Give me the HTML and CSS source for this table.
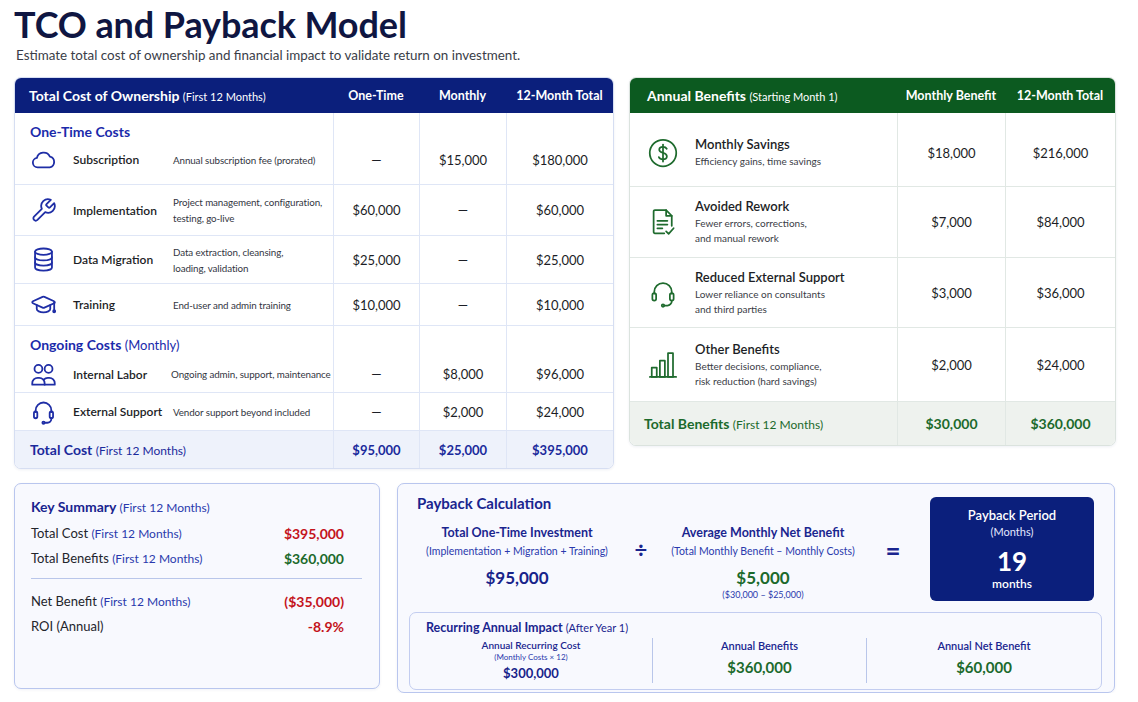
FILE: index.html
```html
<!DOCTYPE html>
<html lang="en">
<head>
<meta charset="utf-8">
<title>TCO and Payback Model</title>
<link rel="stylesheet" href="styles.css">
</head>
<body>
<div class="page">
  <h1 class="title">TCO and Payback Model</h1>
  <p class="subtitle">Estimate total cost of ownership and financial impact to validate return on investment.</p>

  <div class="top-row">
    <section class="card tco">
      <table class="grid">
        <colgroup><col class="t1"><col class="t2"><col class="t3"><col class="t4"></colgroup>
        <thead>
          <tr><th class="th-main">Total Cost of Ownership <span class="th-sub">(First 12 Months)</span></th><th>One-Time</th><th>Monthly</th><th>12-Month Total</th></tr>
        </thead>
        <tbody>
          <tr class="sec s1"><td class="sec-h">One-Time Costs</td><td></td><td></td><td></td></tr>
          <tr class="row r-sub">
            <td><div class="item">
              <svg class="ico" viewBox="0 0 24 24"><path d="M6.8 19a4.2 4.2 0 0 1-.7-8.35 6.2 6.2 0 0 1 11.6-1.2A4.9 4.9 0 0 1 17.6 19Z"/></svg>
              <span class="lbl">Subscription</span><span class="desc">Annual subscription fee (prorated)</span></div></td>
            <td class="num">—</td><td class="num">$15,000</td><td class="num">$180,000</td>
          </tr>
          <tr class="row r-impl">
            <td><div class="item">
              <svg class="ico" viewBox="0 0 24 24"><path d="M14.7 6.3a1 1 0 0 0 0 1.4l1.6 1.6a1 1 0 0 0 1.4 0l3.77-3.77a6 6 0 0 1-7.94 7.94l-6.91 6.91a2.12 2.12 0 0 1-3-3l6.91-6.91a6 6 0 0 1 7.940-7.94l-3.76 3.76z"/></svg>
              <span class="lbl">Implementation</span><span class="desc">Project management, configuration, testing, go-live</span></div></td>
            <td class="num">$60,000</td><td class="num">—</td><td class="num">$60,000</td>
          </tr>
          <tr class="row r-data">
            <td><div class="item">
              <svg class="ico" viewBox="0 0 24 24"><ellipse cx="12" cy="5" rx="7.5" ry="2.8"/><path d="M4.5 5v14c0 1.6 3.4 2.8 7.5 2.8s7.5-1.2 7.5-2.8V5"/><path d="M4.5 10c0 1.6 3.4 2.8 7.5 2.8s7.5-1.2 7.5-2.8"/><path d="M4.5 14.6c0 1.6 3.4 2.8 7.5 2.8s7.5-1.2 7.5-2.8"/></svg>
              <span class="lbl">Data Migration</span><span class="desc">Data extraction, cleansing,<br>loading, validation</span></div></td>
            <td class="num">$25,000</td><td class="num">—</td><td class="num">$25,000</td>
          </tr>
          <tr class="row r-train">
            <td><div class="item">
              <svg class="ico" viewBox="0 0 24 24"><path d="M21.42 10.92a1 1 0 0 0-.02-1.84L12.83 5.18a2 2 0 0 0-1.66 0L2.6 9.08a1 1 0 0 0 0 1.83l8.57 3.91a2 2 0 0 0 1.66 0z"/><path d="M21.5 10v6.5"/><circle cx="21.5" cy="18" r=".9"/><path d="M6 12.5V16c0 1.7 2.7 3 6 3s6-1.3 6-3v-3.5"/></svg>
              <span class="lbl">Training</span><span class="desc">End-user and admin training</span></div></td>
            <td class="num">$10,000</td><td class="num">—</td><td class="num">$10,000</td>
          </tr>
          <tr class="sec s2"><td class="sec-h">Ongoing Costs <span class="sec-sub">(Monthly)</span></td><td></td><td></td><td></td></tr>
          <tr class="row r-labor">
            <td><div class="item">
              <svg class="ico" viewBox="0 0 24 24"><circle cx="7.5" cy="7" r="3.5"/><circle cx="16.5" cy="7" r="3.5"/><path d="M2 21v-1.2A4.8 4.8 0 0 1 6.8 15h1.4a4.8 4.8 0 0 1 4.8 4.8V21Z"/><path d="M13 21h9v-1.2a4.8 4.8 0 0 0-4.8-4.8h-1.4a4.8 4.8 0 0 0-3.6 1.6"/></svg>
              <span class="lbl">Internal Labor</span><span class="desc nowrap">Ongoing admin, support, maintenance</span></div></td>
            <td class="num">—</td><td class="num">$8,000</td><td class="num">$96,000</td>
          </tr>
          <tr class="row r-ext">
            <td><div class="item">
              <svg class="ico" viewBox="0 0 24 24"><path d="M5 12.5V11a7 7 0 0 1 14 0v1.5"/><rect x="3.5" y="12" width="3" height="6" rx="1.5"/><rect x="17.5" y="12" width="3" height="6" rx="1.5"/><path d="M19 18v.5a3.5 3.5 0 0 1-3.5 3.5H13"/><circle cx="12" cy="22" r="1"/></svg>
              <span class="lbl">External Support</span><span class="desc">Vendor support beyond included</span></div></td>
            <td class="num">—</td><td class="num">$2,000</td><td class="num">$24,000</td>
          </tr>
          <tr class="total">
            <td class="tot-h">Total Cost <span class="tot-sub">(First 12 Months)</span></td>
            <td class="num">$95,000</td><td class="num">$25,000</td><td class="num">$395,000</td>
          </tr>
        </tbody>
      </table>
    </section>

    <section class="card ben">
      <table class="grid">
        <colgroup><col class="b1"><col class="b2"><col class="b3"></colgroup>
        <thead>
          <tr><th class="th-main">Annual Benefits <span class="th-sub">(Starting Month 1)</span></th><th>Monthly Benefit</th><th>12-Month Total</th></tr>
        </thead>
        <tbody>
          <tr class="brow b-save">
            <td><div class="bitem">
              <svg class="gico" viewBox="0 0 24 24"><circle cx="12" cy="12" r="10.6"/><path d="M15 8.6c-.5-1-1.6-1.6-3-1.6-1.8 0-3 .9-3 2.3 0 3.2 6.1 1.8 6.1 5.2 0 1.4-1.3 2.5-3.2 2.5-1.5 0-2.7-.6-3.2-1.7"/><path d="M12 5.2v13.6"/></svg>
              <div class="btext"><div class="bt">Monthly Savings</div><div class="bd">Efficiency gains, time savings</div></div></div></td>
            <td class="num">$18,000</td><td class="num">$216,000</td>
          </tr>
          <tr class="brow b-rew">
            <td><div class="bitem">
              <svg class="gico" viewBox="0 0 24 24"><path d="M13 21H5.5a1 1 0 0 1-1-1V3.5a1 1 0 0 1 1-1h9l4.5 4.5V15"/><path d="M14.5 2.5V7H19"/><path d="M7.5 11h8"/><path d="M7.5 14h8"/><path d="M7.5 17h4"/><path d="M14.5 19.5l2 2 4-4.5"/></svg>
              <div class="btext"><div class="bt">Avoided Rework</div><div class="bd">Fewer errors, corrections,<br>and manual rework</div></div></div></td>
            <td class="num">$7,000</td><td class="num">$84,000</td>
          </tr>
          <tr class="brow b-ext">
            <td><div class="bitem">
              <svg class="gico" viewBox="0 0 24 24"><path d="M5 12.5V11a7 7 0 0 1 14 0v1.5"/><rect x="3.5" y="12" width="3" height="6" rx="1.5"/><rect x="17.5" y="12" width="3" height="6" rx="1.5"/><path d="M19 18v.5a3.5 3.5 0 0 1-3.5 3.5H13"/><circle cx="12" cy="22" r="1"/></svg>
              <div class="btext"><div class="bt">Reduced External Support</div><div class="bd">Lower reliance on consultants<br>and third parties</div></div></div></td>
            <td class="num">$3,000</td><td class="num">$36,000</td>
          </tr>
          <tr class="brow b-oth">
            <td><div class="bitem">
              <svg class="gico" viewBox="0 0 24 24"><path d="M1.5 21.5h21"/><rect x="3" y="14" width="4" height="7.5"/><rect x="9.5" y="8.5" width="4" height="13"/><rect x="16" y="2.5" width="4" height="19"/></svg>
              <div class="btext"><div class="bt">Other Benefits</div><div class="bd">Better decisions, compliance,<br>risk reduction (hard savings)</div></div></div></td>
            <td class="num">$2,000</td><td class="num">$24,000</td>
          </tr>
          <tr class="btotal">
            <td class="btot-h">Total Benefits <span class="btot-sub">(First 12 Months)</span></td>
            <td class="num">$30,000</td><td class="num">$360,000</td>
          </tr>
        </tbody>
      </table>
    </section>
  </div>

  <div class="bottom-row">
    <section class="panel summary">
      <h2 class="ks-title">Key Summary <span class="ks-sub">(First 12 Months)</span></h2>
      <div class="ks-row"><span>Total Cost <span class="ks-note">(First 12 Months)</span></span><span class="ks-val red">$395,000</span></div>
      <div class="ks-row"><span>Total Benefits <span class="ks-note">(First 12 Months)</span></span><span class="ks-val green">$360,000</span></div>
      <hr class="ks-div">
      <div class="ks-row"><span>Net Benefit <span class="ks-note">(First 12 Months)</span></span><span class="ks-val red">($35,000)</span></div>
      <div class="ks-row"><span>ROI (Annual)</span><span class="ks-val red">-8.9%</span></div>
    </section>

    <section class="panel payback">
      <div class="pay-top">
        <div class="pay-left">
          <h2 class="pay-title">Payback Calculation</h2>
          <div class="formula">
            <div class="fcol f1">
              <div class="f-head">Total One-Time Investment</div>
              <div class="f-sub">(Implementation + Migration + Training)</div>
              <div class="f-val">$95,000</div>
            </div>
            <div class="op op1">÷</div>
            <div class="fcol f2">
              <div class="f-head">Average Monthly Net Benefit</div>
              <div class="f-sub">(Total Monthly Benefit – Monthly Costs)</div>
              <div class="f-val green">$5,000</div>
              <div class="f-note">($30,000 – $25,000)</div>
            </div>
            <div class="op op2">=</div>
          </div>
        </div>
        <div class="pay-box">
          <div class="pb-t">Payback Period</div>
          <div class="pb-s">(Months)</div>
          <div class="pb-n">19</div>
          <div class="pb-u">months</div>
        </div>
      </div>
      <div class="recur">
        <div class="rc-title">Recurring Annual Impact <span class="rc-sub">(After Year 1)</span></div>
        <div class="rc-cols">
          <div class="rc-col">
            <div class="rc-h small">Annual Recurring Cost</div>
            <div class="rc-n">(Monthly Costs × 12)</div>
            <div class="rc-v navy">$300,000</div>
          </div>
          <div class="rc-col sep">
            <div class="rc-h">Annual Benefits</div>
            <div class="rc-v big green">$360,000</div>
          </div>
          <div class="rc-col sep">
            <div class="rc-h">Annual Net Benefit</div>
            <div class="rc-v big green">$60,000</div>
          </div>
        </div>
      </div>
    </section>
  </div>
</div>
</body>
</html>
```

FILE: styles.css
```css
* { box-sizing: border-box; }
body {
  margin: 0;
  background: #ffffff;
  font-family: Lato, "Open Sans", "Liberation Sans", sans-serif;
  color: #1c1e26;
}
.page { width: 1138px; padding: 2px 0 0 14px; }

.title {
  margin: 0;
  font-size: 36px;
  line-height: 44px;
  font-weight: 700;
  color: #0f1642;
  letter-spacing: -0.1px;
}
.subtitle {
  margin: 0 0 0 2px;
  font-size: 13.4px;
  line-height: 18px;
  color: #3a3d48;
}

.top-row { display: flex; align-items: flex-start; gap: 15px; margin-top: 13px; }

.card {
  border: 1px solid #d6def2;
  border-radius: 7px;
  overflow: hidden;
  background: #fff;
  box-shadow: 0 1px 3px rgba(20, 40, 120, 0.07);
}
.tco { width: 600px; }
.ben { width: 487px; border-color: #dbe3de; }

.grid { width: 100%; border-collapse: separate; border-spacing: 0; table-layout: fixed; }
.t1 { width: 318px; } .t2 { width: 86px; } .t3 { width: 87px; } .t4 { width: 107px; }
.b1 { width: 267px; } .b2 { width: 108px; } .b3 { width: 110px; }

.grid th {
  height: 35px;
  padding: 0;
  color: #fff;
  font-size: 12.5px;
  font-weight: 700;
  text-align: center;
  vertical-align: middle;
}
.tco th { background: #0b1f7c; }
.ben th { background: #0c5a20; }
.grid th.th-main { text-align: left; font-size: 14px; padding-left: 14px; }
.ben th.th-main { padding-left: 17px; }
.th-sub { font-size: 11px; font-weight: 400; }

.grid td { padding: 0; vertical-align: middle; }
.tco td { border-bottom: 1px solid #dfe6f6; }
.tco td + td { border-left: 1px solid #dfe6f6; }
.tco tr.sec td { border-bottom: 0; }

.num { text-align: center; font-size: 13px; color: #1c1e26; }

.sec-h {
  padding-left: 15px !important;
  font-size: 14px;
  font-weight: 700;
  color: #1b2bab;
  vertical-align: bottom !important;
}
.sec-sub { font-weight: 400; font-size: 13px; }
.s1 td { height: 28px; padding-bottom: 1px; }
.s2 td { height: 27px; }

.r-sub td { height: 44px; padding-bottom: 6px; }
.r-impl td { height: 51px; }
.r-data td { height: 48px; }
.r-train td { height: 42px; }
.r-labor td { height: 40px; padding-top: 3px; }
.r-ext td { height: 38px; }

.item { display: flex; align-items: center; padding-left: 15px; }
.ico {
  flex: none;
  width: 27px;
  height: 27px;
  fill: none;
  stroke: #1f2ea6;
  stroke-width: 1.6;
  stroke-linecap: round;
  stroke-linejoin: round;
}
.lbl { flex: none; width: 100px; margin-left: 16px; font-size: 12px; font-weight: 600; color: #1c1e26; }
.desc { flex: 1; padding-right: 2px; font-size: 9.8px; letter-spacing: -0.1px; line-height: 16px; color: #33363f; }
.desc.nowrap { white-space: nowrap; margin-left: -2px; }

.total td { height: 37px; background: #eef2fb; border-bottom: 0; color: #1b2a9c; }
.tot-h { padding-left: 15px !important; font-size: 14px; font-weight: 700; color: #1b2a9c; }
.tot-sub { font-size: 12px; font-weight: 400; }
.total .num { font-weight: 700; font-size: 13px; color: #1b2a9c; }

.ben td { border-bottom: 1px solid #e1e8e4; }
.ben td + td { border-left: 1px solid #e1e8e4; }
.b-save td { height: 74px; padding-top: 6px; }
.b-rew td { height: 71px; }
.b-ext td { height: 70px; }
.b-oth td { height: 74px; }

.bitem { display: flex; align-items: center; padding-left: 18px; }
.gico {
  flex: none;
  width: 30px;
  height: 30px;
  fill: none;
  stroke: #1f6b2e;
  stroke-width: 1.4;
  stroke-linecap: round;
  stroke-linejoin: round;
}
.btext { margin-left: 17px; }
.bt { font-size: 13px; font-weight: 600; line-height: 17px; color: #1c1e26; }
.bd { font-size: 10px; line-height: 15px; color: #3a3d46; margin-top: 1px; }

.btotal td { height: 43px; background: #eef2ee; border-bottom: 0; }
.btot-h { padding-left: 14px !important; font-size: 14px; font-weight: 700; color: #1c6a2c; }
.btot-sub { font-size: 12px; font-weight: 400; }
.btotal .num { font-size: 14px; font-weight: 700; color: #1c6a2c; }

.bottom-row { display: flex; align-items: flex-start; gap: 17px; margin-top: 14px; }

.panel {
  border: 1px solid #b9c6ee;
  border-radius: 7px;
  background: #f8f9fe;
  box-shadow: 0 1px 3px rgba(20, 40, 120, 0.06);
}

.summary { width: 366px; height: 206px; padding: 14px 17px 0 16px; }
.ks-title { margin: 0; font-size: 14px; line-height: 18px; font-weight: 700; color: #1a258f; }
.ks-sub { font-size: 12px; font-weight: 400; color: #2a39ad; }
.ks-row {
  display: flex;
  justify-content: space-between;
  align-items: center;
  height: 20px;
  margin-top: 5px;
  padding-right: 18px;
  font-size: 13px;
  color: #23252c;
}
.ks-title + .ks-row { margin-top: 6px; }
.ks-note { font-size: 12px; color: #2a39ad; }
.ks-val { font-size: 14px; font-weight: 700; }
.ks-div { margin: 10px 0 0 0; border: 0; border-top: 1px solid #b9c6ea; height: 0; }
.ks-div + .ks-row { margin-top: 12px; }
.red { color: #c4141c; }
.green { color: #1c6a2c; }
.navy { color: #17238a; }

.payback { width: 718px; height: 210px; padding: 9px 12px 2px 11px; }
.pay-top { display: flex; }
.pay-left { flex: 1; padding-left: 8px; }
.pay-title { margin: 0; font-size: 15px; line-height: 20px; font-weight: 700; color: #1a258f; }
.formula { display: flex; align-items: flex-start; margin-top: 12px; }
.fcol { text-align: center; }
.f1 { width: 200px; }
.f2 { width: 196px; }
.f-head { font-size: 12.5px; line-height: 16px; font-weight: 700; color: #1a258f; }
.f-sub { margin-top: 2px; font-size: 10.5px; line-height: 16px; color: #2a39ad; }
.f-val { margin-top: 8px; font-size: 17px; line-height: 22px; font-weight: 700; color: #17238a; }
.f-val.green { color: #1c6a2c; }
.f-note { font-size: 9px; line-height: 12px; color: #2a39ad; }
.op { margin-top: 13px; height: 24px; line-height: 24px; text-align: center; font-weight: 700; color: #1a258f; }
.op1 { width: 48px; font-size: 22px; }
.op2 { width: 64px; font-size: 26px; }

.pay-box {
  flex: none;
  width: 164px;
  height: 104px;
  margin: 4px 8px 0 0;
  border-radius: 6px;
  background: #0b1f7c;
  color: #fff;
  text-align: center;
  padding-top: 9px;
}
.pb-t { font-size: 13px; line-height: 18px; font-weight: 600; }
.pb-s { font-size: 11px; line-height: 16px; color: #e4e8ff; }
.pb-n { margin-top: 6px; font-size: 26px; line-height: 30px; font-weight: 700; }
.pb-u { font-size: 12px; line-height: 16px; font-weight: 600; }

.recur {
  margin-top: 11px;
  height: 78px;
  border: 1px solid #c3cdf0;
  border-radius: 7px;
  background: #f8f9fe;
  padding: 7px 0 0 0;
}
.rc-title { padding-left: 16px; font-size: 12.5px; line-height: 16px; font-weight: 700; color: #1a258f; }
.rc-sub { font-size: 11px; font-weight: 400; }
.rc-cols { display: grid; grid-template-columns: 242px 214px 1fr; margin-top: 2px; }
.rc-col { text-align: center; padding-top: 1px; height: 45px; }
.rc-col.sep { border-left: 1px solid #b9c6ea; }
.rc-h { font-size: 11px; line-height: 14px; font-weight: 600; color: #1a258f; }
.rc-h.small { font-size: 10px; line-height: 13px; }
.rc-n { font-size: 8px; line-height: 11px; color: #2a39ad; }
.rc-v { font-size: 13px; line-height: 17px; font-weight: 700; margin-top: 2px; }
.rc-v.big { font-size: 15px; line-height: 20px; margin-top: 4px; }
```
